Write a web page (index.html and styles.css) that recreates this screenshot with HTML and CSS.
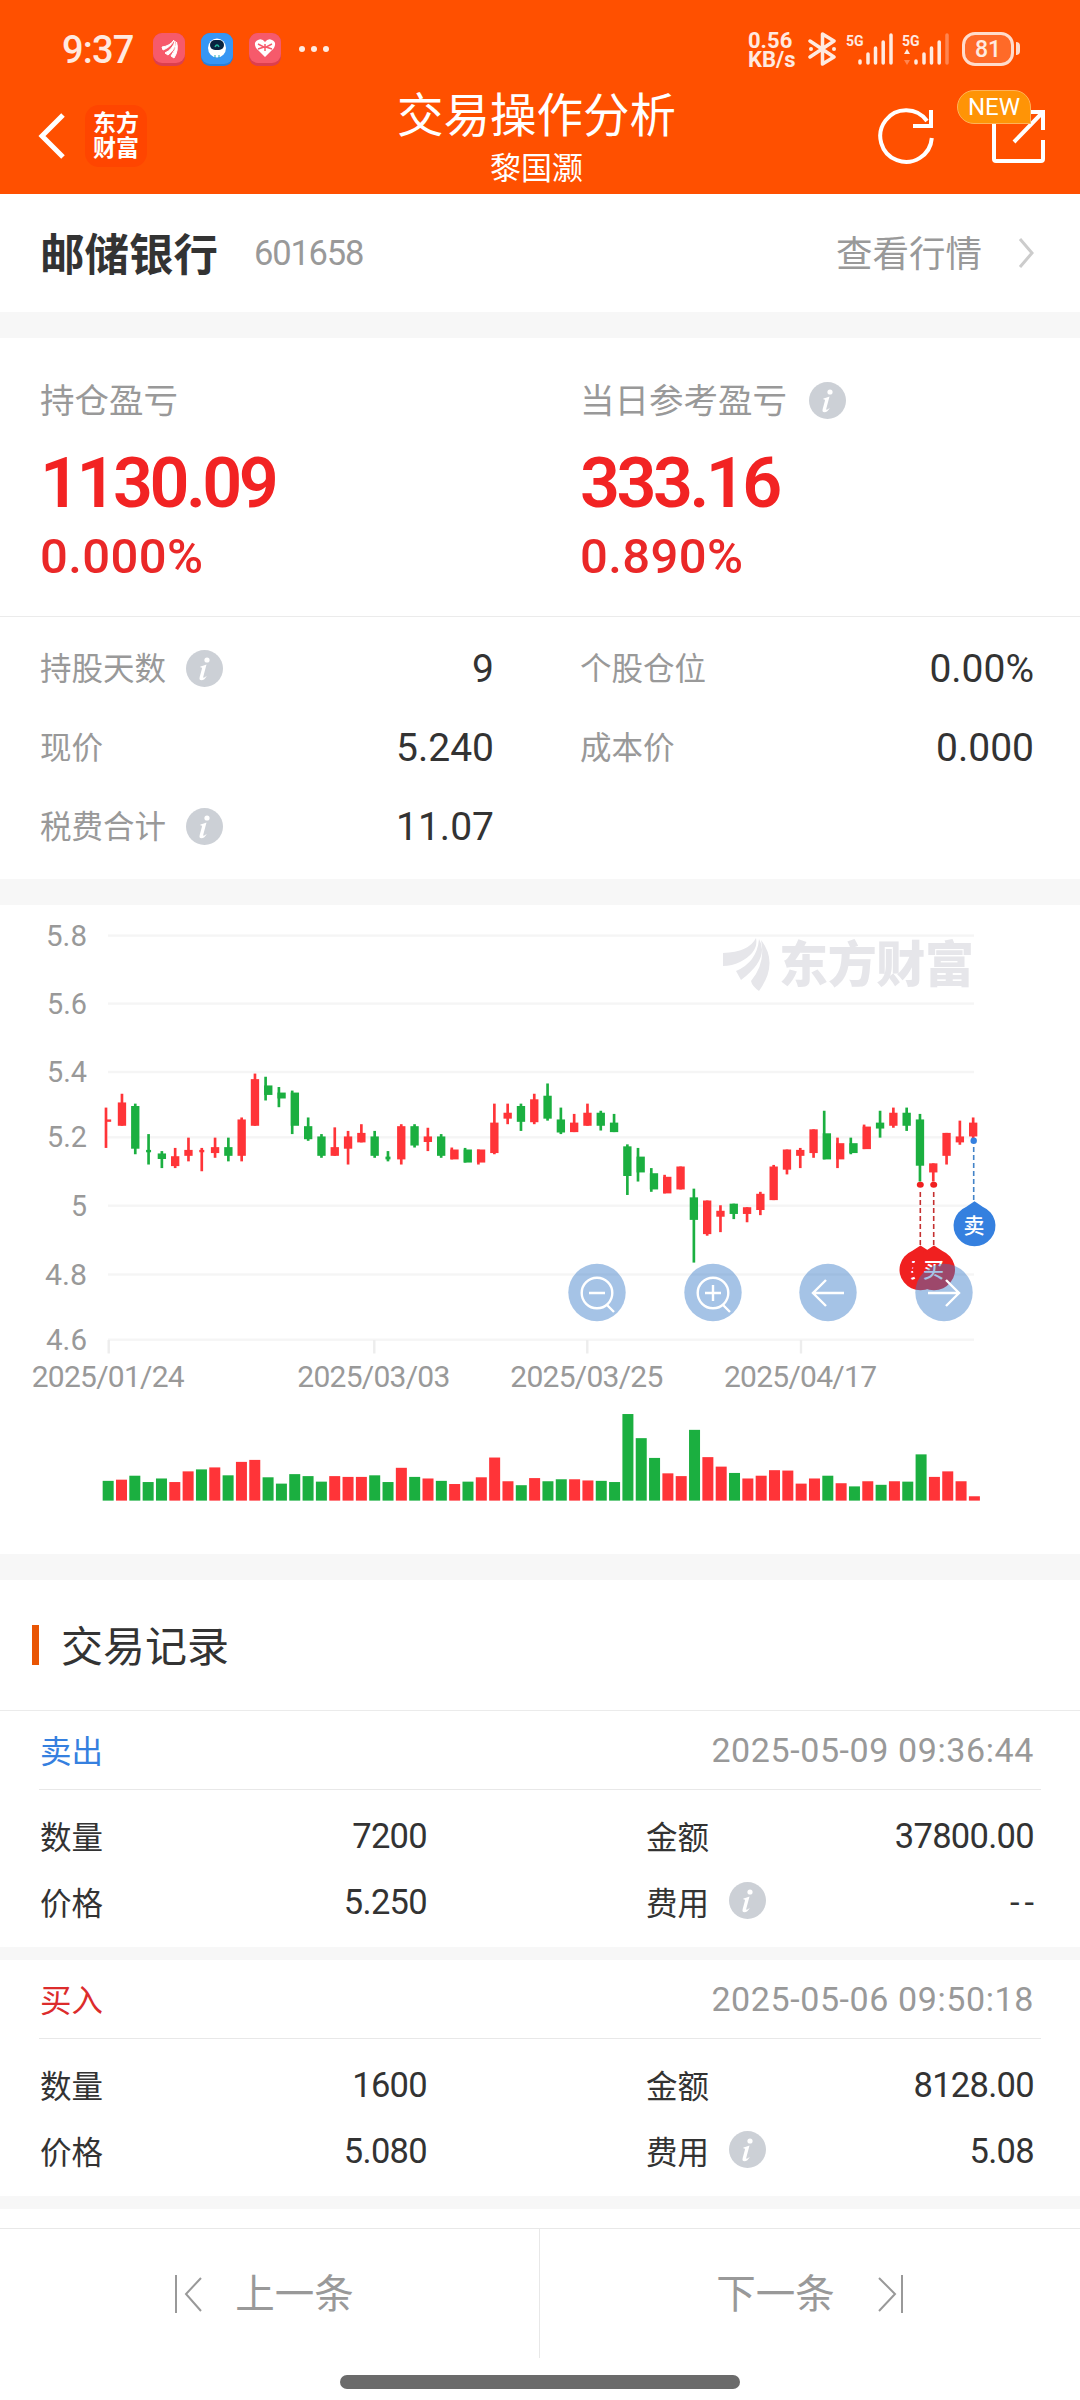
FILE: index.html
```html
<!DOCTYPE html>
<html lang="zh-CN">
<head>
  <meta charset="UTF-8">
  <meta name="viewport" content="width=device-width, initial-scale=1.0">
  <title>交易操作分析</title>
  <link rel="stylesheet" href="styles.css">
</head>
<body>

<svg class="defs" width="0" height="0">
  <symbol id="info" viewBox="0 0 37 37">
    <circle cx="18.500" cy="18.500" r="18.500" fill="#ccd0d6"/>
    <circle cx="21" cy="10" r="2.600" fill="#fff"/>
    <path d="M14.500 16.500 Q18 15.500 20.500 14.500 L17.200 27 Q17 28.800 20.800 25.800 Q18.500 30.300 15.500 30.300 Q12.800 30.200 13.700 27 L16 18.500 Q16.200 17.300 14.200 17.300 Z" fill="#fff"/>
  </symbol>
  <symbol id="signal" viewBox="0 0 36 32">
    <path d="M2 28v2M10 21v9M17.500 15v15M25.200 9v21" stroke="#ffeae0" stroke-width="3.500" stroke-linecap="round"/>
  </symbol>
</svg>

<header>
  <!-- Status bar -->
  <div class="status">
    <span class="time">9:37</span>
    <div class="apps">
      <svg width="32" height="33" viewBox="0 0 32 33"><rect width="32" height="33" rx="9" fill="#dc3f4e"/><rect width="32" height="30" rx="9" fill="#f65a6b"/><path d="M9 14Q17 13 21 7Q18 14 10 17ZM12 20Q20 16 22 8Q23 16 15 22ZM18 23Q23 17 23.500 9Q26 17 21 25Z" fill="#fff" stroke="#fff"/></svg>
      <svg width="32" height="33" viewBox="0 0 32 33"><rect width="32" height="33" rx="9" fill="#2a7fd8"/><rect width="32" height="31" rx="9" fill="#3796f4"/><ellipse cx="16" cy="15" rx="9" ry="9.500" fill="#fff"/><rect x="9" y="7" width="14" height="10" rx="5" fill="#0a2440"/><path d="M14 14q2-4 4 0" stroke="#23b79b" stroke-width="1.500" fill="none"/><path d="M14 22v3M18 22v3" stroke="#23a7b5"/></svg>
      <svg width="32" height="33" viewBox="0 0 32 33"><rect width="32" height="33" rx="9" fill="#dc3f4e"/><rect width="32" height="30" rx="9" fill="#f65a6b"/><path d="M16 24L7 15Q4 9 9 7Q13 5 16 9Q19 5 23 7Q28 9 25 15Z" fill="#fff"/><path d="M9 11l6 3-6 2M23 11l-6 3 6 2M16 11v7" stroke="#f65a6b" fill="none" stroke-width="1.500"/></svg>
    </div>
    <svg class="dots" width="32" height="8" viewBox="0 0 32 8"><circle cx="4" cy="4" r="3"/><circle cx="16" cy="4" r="3"/><circle cx="28" cy="4" r="3"/></svg>
    <div class="speed"><span>0.56</span><span>KB/s</span></div>
    <svg class="bluetooth" width="29" height="34" viewBox="0 0 29 34"><path d="M2 9L26 25L14.500 32V2L26 9L2 25" fill="none" stroke="#ffeae0" stroke-width="3.500" stroke-linejoin="round" stroke-linecap="round"/><circle cx="3" cy="17" r="2" fill="#ffeae0"/><circle cx="26" cy="17" r="2" fill="#ffeae0"/></svg>
    <div class="signal">
      <span>5G</span>
      <svg width="36" height="32"><use href="#signal"/><path d="M33 2v28" stroke="#ffeae0" stroke-width="3.500" stroke-linecap="round"/></svg>
    </div>
    <div class="signal">
      <span>5G</span>
      <svg class="updown" width="6" height="16" viewBox="0 0 6 16"><path d="M3 0l3 5H0z" fill="#ffeae0"/><path d="M3 16l3-5H0z" fill="#ff8550"/></svg>
      <svg width="36" height="32"><use href="#signal"/><path d="M33 2v28" stroke="#ff8550" stroke-width="3.500" stroke-linecap="round"/></svg>
    </div>
    <div class="battery">81</div>
  </div>

  <!-- Title bar -->
  <div class="navbar">
    <div class="nav-left">
      <svg width="28" height="46" viewBox="0 0 28 46"><path d="M25 2L4 23L25 44" fill="none" stroke="#fff" stroke-width="5"/></svg>
      <div class="brand">东方<br>财富</div>
    </div>
    <div class="nav-title">
      <h1>交易操作分析</h1>
      <p>黎国灏</p>
    </div>
    <div class="nav-right">
      <svg width="58" height="60" viewBox="0 0 58 60"><path d="M50 15A25.800 25.800 0 1 0 54.800 32" fill="none" stroke="#fff" stroke-width="4"/><path d="M54 4V20H36" fill="none" stroke="#fff" stroke-width="4"/></svg>
      <div class="share">
        <svg width="56" height="56" viewBox="0 0 56 56"><path d="M3 14V51Q3 53 5 53H50Q52 53 52 51V32M36 4H52V22M52 4L23 34" fill="none" stroke="#fff" stroke-width="4"/></svg>
        <span class="badge">NEW</span>
      </div>
    </div>
  </div>
</header>

<section class="stock">
  <h2>邮储银行</h2>
  <span class="code">601658</span>
  <a href="#">查看行情</a>
  <svg width="16" height="30" viewBox="0 0 16 30"><path d="M2 1L14 15L2 29" fill="none" stroke="#ccc" stroke-width="3"/></svg>
</section>

<section class="summary">
  <div class="totals">
    <div class="total">
      <div class="label"><span>持仓盈亏</span></div>
      <div class="amount">1130.09</div>
      <div class="percent">0.000%</div>
    </div>
    <div class="total">
      <div class="label"><span>当日参考盈亏</span><svg class="info"><use href="#info"/></svg></div>
      <div class="amount">333.16</div>
      <div class="percent">0.890%</div>
    </div>
  </div>
  <div class="details">
    <div class="detail"><span>持股天数</span><svg class="info"><use href="#info"/></svg><b>9</b></div>
    <div class="detail"><span>个股仓位</span><b>0.00%</b></div>
    <div class="detail"><span>现价</span><b>5.240</b></div>
    <div class="detail"><span>成本价</span><b>0.000</b></div>
    <div class="detail"><span>税费合计</span><svg class="info"><use href="#info"/></svg><b>11.07</b></div>
  </div>
</section>

<section class="chart">
  <svg width="1080" height="649" viewBox="0 5 1080 649">
    <!-- Watermark -->
    <g fill="#e6e6ea">
      <path d="M723 53Q749 52 756 38Q759 52 740 62Q732 66 723 66ZM736 71Q757 62 759 39Q770 58 741 80ZM751 81Q766 63 761 40Q779 63 759 91Q752 86 751 81Z"/>
      <text class="watermark" x="779" y="82" textLength="195">东方财富</text>
    </g>
    <g id="grid"></g>
    <!-- Candles and volume use a finer grid than the page -->
    <svg width="1080" height="620" viewBox="0 0 3240 1568" preserveAspectRatio="none">
      <g id="candles"></g>
      <g id="volume"></g>
    </svg>
    <!-- Trade markers -->
    <g class="buy">
      <path class="guide" d="M920.300 292V345M933.700 292V345"/>
      <ellipse cx="920.300" cy="284.700" rx="3.500" ry="3"/>
      <ellipse cx="933.700" cy="284.700" rx="3.500" ry="3"/>
      <path d="M920.500 345.500L929 351A21 20.500 0 1 1 912 351Z"/>
      <text x="910" y="377">买</text>
      <path d="M934 345.500L942.500 351A21 20.500 0 1 1 925.500 351Z"/>
      <text x="923" y="377">买</text>
    </g>
    <g class="sell">
      <path class="guide" d="M973.700 247V300"/>
      <circle cx="973.700" cy="240.800" r="3.200"/>
      <path d="M974.500 301.300L983 307A21 20.500 0 1 1 966 307Z"/>
      <text x="963.500" y="333">卖</text>
    </g>
    <!-- Zoom and scroll buttons -->
    <g class="control">
      <circle cx="597" cy="392.500" r="28.700"/>
      <circle cx="713" cy="392.500" r="28.700"/>
      <circle cx="828" cy="392.500" r="28.700"/>
      <circle cx="944" cy="392.500" r="28.700"/>
      <path d="M589 393h16M607 405l7 7M705 393h16M713 385v16M723 405l7 7"/>
      <path d="M844 393H813M826 380L813 393L826 406M928 393H959M946 380L959 393L946 406"/>
      <circle class="lens" cx="597" cy="393" r="15.300"/>
      <circle class="lens" cx="713" cy="393" r="15.300"/>
    </g>
  </svg>
</section>

<section class="records">
  <h3><span>交易记录</span></h3>
  <div class="record">
    <div class="record-head"><span class="sell-text">卖出</span><time>2025-05-09 09:36:44</time></div>
    <div class="record-body">
      <span>数量</span><b>7200</b><span>金额</span><b>37800.00</b>
      <span>价格</span><b>5.250</b><span>费用 <svg class="info"><use href="#info"/></svg></span><b class="dash">--</b>
    </div>
  </div>
  <div class="record">
    <div class="record-head"><span class="buy-text">买入</span><time>2025-05-06 09:50:18</time></div>
    <div class="record-body">
      <span>数量</span><b>1600</b><span>金额</span><b>8128.00</b>
      <span>价格</span><b>5.080</b><span>费用 <svg class="info"><use href="#info"/></svg></span><b>5.08</b>
    </div>
  </div>
</section>

<footer>
  <div class="pager">
    <a href="#"><svg width="28" height="38" viewBox="0 0 28 38"><path d="M1 0V38M26 3L11 19L26 36"/></svg><span>上一条</span></a>
    <a href="#"><span>下一条</span><svg width="28" height="38" viewBox="0 0 28 38"><path d="M26 0V38M3 3L19 19L3 36"/></svg></a>
  </div>
  <div class="home-bar"></div>
</footer>

<script src="chart.js"></script>
</body>
</html>
```

FILE: styles.css
```css
/* General Styling */
* {
  box-sizing: border-box;
}

body {
  margin: 0;
  width: 1080px;
  height: 2400px;
  overflow: hidden;
  display: flex;
  flex-direction: column;
  background: #f7f7f7;
  color: #333;
  font-family: Roboto, "Noto Sans CJK SC", sans-serif;
}

h1, h2, h3, p {
  margin: 0;
  font-weight: 400;
}

a {
  color: #999;
  text-decoration: none;
}

b {
  font-weight: 400;
}

svg {
  display: block;
  flex: none;
}

.defs {
  position: absolute;
}

.info {
  width: 37px;
  height: 37px;
}

/* Header */
header {
  height: 194px;
  background: #ff5000;
  color: #fff;
}

.status {
  display: flex;
  align-items: center;
  height: 78px;
  padding: 20px 60px 0 62px;
  color: #ffeae0;
}

.time {
  width: 91px;
  padding-top: 2px;
  font-size: 38px;
  font-weight: 500;
  letter-spacing: -0.8px;
}

.apps {
  display: flex;
  gap: 16px;
}

.dots {
  margin-left: 17px;
  fill: #ffeae0;
}

.speed {
  display: flex;
  flex-direction: column;
  width: 60px;
  margin-left: 418px;
  padding-top: 2px;
  font-size: 22px;
  font-weight: 700;
  line-height: 19px;
}

.bluetooth {
  margin-right: 9px;
}

.signal {
  position: relative;
  display: flex;
  padding-left: 12px;
  margin-right: 8px;
}

.signal span {
  position: absolute;
  left: 0;
  top: 0;
  font-size: 14px;
  font-weight: 700;
  line-height: 16px;
}

.updown {
  position: absolute;
  left: 2px;
  top: 16px;
}

.battery {
  position: relative;
  width: 52px;
  height: 34px;
  margin-left: 4px;
  border: 3.5px solid #ffdccc;
  border-radius: 13px;
  background: #ff6a28;
  font-size: 23px;
  font-weight: 500;
  line-height: 29px;
  text-align: center;
}

.battery::after {
  content: "";
  position: absolute;
  right: -9px;
  top: 7px;
  width: 4px;
  height: 13px;
  border-radius: 0 4px 4px 0;
  background: #ffdccc;
}

.navbar {
  display: grid;
  grid-template-columns: 292px 1fr 304px;
  height: 116px;
  padding: 0 33px 0 38px;
}

.nav-left {
  display: flex;
  align-items: center;
  gap: 19px;
}

.brand {
  width: 62px;
  height: 62px;
  padding-top: 4px;
  border-radius: 14px;
  background: #ff4500;
  font-family: "Noto Sans CJK SC", sans-serif;
  font-size: 23px;
  font-weight: 700;
  line-height: 25px;
  text-align: center;
}

.nav-title {
  display: flex;
  flex-direction: column;
  align-items: center;
  white-space: nowrap;
}

.nav-title h1 {
  font-size: 46.5px;
  line-height: 60px;
  margin-top: 8px;
}

.nav-title p {
  font-size: 31px;
  line-height: 44px;
  margin-top: 1px;
}

.nav-right {
  display: flex;
  justify-content: flex-end;
  align-items: center;
  gap: 56px;
}

.share {
  position: relative;
}

.badge {
  position: absolute;
  right: 16px;
  top: -18px;
  width: 74px;
  height: 34px;
  border: 1px solid #ffb257;
  border-radius: 17px 17px 0 17px;
  background: #ff9406;
  font-size: 24px;
  line-height: 33px;
  text-align: center;
}

/* Stock name */
.stock {
  display: flex;
  align-items: center;
  height: 118px;
  padding: 0 46px 0 40px;
  background: #fff;
}

.stock h2 {
  padding-bottom: 4px;
  font-size: 44.5px;
  font-weight: 700;
}

.code {
  margin-left: 36px;
  font-size: 34.5px;
  letter-spacing: -1.2px;
  color: #999;
}

.stock a {
  margin-left: auto;
  margin-right: 36px;
  padding-bottom: 4px;
  font-size: 36.5px;
}

/* Profit summary */
.summary {
  height: 541px;
  margin-top: 26px;
  background: #fff;
}

.totals {
  display: grid;
  grid-template-columns: 540px 540px;
  height: 279px;
  padding-top: 38px;
  border-bottom: 1px solid #ebebeb;
}

.total {
  padding-left: 40px;
}

.label {
  display: flex;
  align-items: center;
  gap: 22px;
  height: 48px;
  font-size: 34.5px;
  color: #999;
}

.label span,
.detail span {
  padding-bottom: 5px;
}

.amount {
  margin-top: 19px;
  font-size: 70px;
  font-weight: 600;
  line-height: 80px;
  letter-spacing: -3.5px;
  color: #f22323;
}

.percent {
  margin-top: 4px;
  font-size: 49px;
  font-weight: 500;
  line-height: 60px;
  letter-spacing: 0.4px;
  color: #ea2828;
}

.details {
  display: grid;
  grid-template-columns: 540px 540px;
  grid-auto-rows: 79px;
  padding-top: 12px;
}

.detail {
  display: flex;
  align-items: center;
  gap: 20px;
  padding: 0 46px 0 40px;
  font-size: 31.5px;
  color: #999;
}

.detail b {
  margin-left: auto;
  font-size: 39px;
  color: #333;
}

/* Chart */
.chart {
  height: 649px;
  margin-top: 26px;
  background: #fff;
}

.watermark {
  font-family: "Noto Sans CJK SC", sans-serif;
  font-size: 49px;
  font-weight: 900;
}

.axis {
  font-size: 30px;
  fill: #999;
}

.buy {
  fill: #f02020;
}

.sell {
  fill: #3580df;
}

.buy text,
.sell text {
  font-size: 21px;
  font-weight: 500;
  fill: #fff;
}

.guide {
  fill: none;
  stroke-width: 1.6;
  stroke-dasharray: 5 3;
}

.buy .guide {
  stroke: #c53030;
}

.sell .guide {
  stroke: #4383c8;
}

.control {
  fill: rgba(55, 122, 200, 0.45);
}

.control path,
.control .lens {
  fill: none;
  stroke: #fff;
  stroke-width: 2.4;
}

/* Trade records */
.records {
  margin-top: 26px;
}

.records h3 {
  display: flex;
  align-items: center;
  height: 131px;
  padding-left: 32px;
  border-bottom: 1px solid #ebebeb;
  background: #fff;
  font-size: 42px;
}

.records h3::before {
  content: "";
  width: 7px;
  height: 40px;
  margin-right: 22px;
  background: #e95504;
}

.records h3 span {
  padding-bottom: 4px;
}

.record {
  height: 236px;
  margin-bottom: 13px;
  background: #fff;
}

.record-head {
  display: flex;
  justify-content: space-between;
  align-items: center;
  height: 79px;
  margin: 0 39px;
  padding: 0 7px 0 1px;
  border-bottom: 1px solid #e8e8e8;
  font-size: 31.5px;
}

.record-head span {
  padding-bottom: 3px;
}

.record-head time {
  font-size: 34px;
  letter-spacing: 0.6px;
  color: #999;
}

.sell-text {
  color: #3580df;
}

.buy-text {
  color: #dc2c2c;
}

.record-body {
  display: grid;
  grid-template-columns: 194px 193px 1fr 194px;
  grid-auto-rows: 66px;
  align-items: center;
  padding: 13px 46px 0 40px;
  font-size: 31.5px;
}

.record-body span {
  display: flex;
  align-items: center;
  gap: 20px;
  padding-bottom: 3px;
}

.record-body span:nth-of-type(even) {
  padding-left: 219px;
}

.record-body b {
  font-size: 34.5px;
  letter-spacing: -0.7px;
  text-align: right;
}

.record-body .dash {
  letter-spacing: 5px;
  margin-right: -5px;
}

/* Footer */
footer {
  flex: 1;
  padding-top: 19px;
  background: #fff;
}

.pager {
  display: grid;
  grid-template-columns: 1fr 1fr;
  height: 130px;
  border-top: 1px solid #e8e8e8;
}

.pager a {
  display: flex;
  align-items: center;
  justify-content: center;
  gap: 32px;
  font-size: 39.5px;
}

.pager a:first-child {
  padding-right: 10px;
  border-right: 1px solid #e8e8e8;
}

.pager a:last-child {
  gap: 41px;
}

.pager span {
  padding-bottom: 6px;
}

.pager path {
  fill: none;
  stroke: #999;
  stroke-width: 2;
}

.home-bar {
  width: 400px;
  height: 14px;
  margin: 17px auto 0;
  border-radius: 7px;
  background: #6b6b6b;
}
```

FILE: chart.js
```javascript
// [up, high, body top, body bottom, low, volume, wick on the left edge]
var candles = [
  [1,525,555,561,627,50,1],[1,490,512,571,571,53],[0,515,521,629,643,63],[0,592,632,638,669,47],
  [0,635,641,655,678,56],[1,627,648,673,678,47],[1,601,632,647,661,74],[1,627,632,638,686,79],
  [1,601,625,640,652,84],[0,601,625,647,661,64],[1,550,555,647,661,98],[1,439,453,571,571,103],
  [0,447,469,493,507,59,1],[0,473,487,502,524,43,1],[0,482,487,571,592,67,1],[0,550,572,605,609,62],
  [0,592,598,647,652,48],[1,575,625,647,647,62],[1,584,598,629,669,60],[1,567,589,613,613,60],
  [0,584,598,647,652,64],[0,635,649,656,661,47],[1,567,572,656,669,83],[0,567,572,621,626,60],
  [1,576,598,612,635,56],[0,592,598,647,652,50],[1,626,631,656,656,42,1],[0,627,631,664,664,48,1],
  [1,631,631,664,669,59,1],[1,515,563,640,643,109],[1,515,538,553,567,49],[0,515,521,561,584,39],
  [1,490,504,562,567,57],[0,464,495,553,558,49],[0,525,555,588,592,54],[1,541,563,587,587,54],
  [1,515,538,571,571,51],[0,533,538,571,583,50],[0,541,563,587,587,47],[0,618,623,698,746,219],
  [0,627,649,689,712,158,1],[0,678,691,732,738,108,1],[1,695,700,742,742,69,1],[1,674,674,732,732,62],
  [0,730,752,809,917,179],[1,760,760,845,849,110],[1,772,786,801,840,86],[0,768,768,794,807,70],
  [1,777,777,794,815,56],[1,738,743,784,797,63],[1,670,674,759,759,77],[1,631,631,682,694,76],
  [1,627,632,647,678,43],[1,580,580,640,652,56],[0,533,590,656,656,63,1],[1,601,615,656,678,44,1],
  [0,601,615,640,643,36,1],[1,568,573,630,630,49,1],[0,533,563,578,601,40],[1,525,538,571,576,49],
  [0,525,538,571,584,48],[0,541,555,672,712,117],[1,666,666,689,712,60],[1,589,589,647,669,74],
  [1,558,598,613,619,49],[1,550,563,598,605,11]
];
var UP = '#ff3438';
var DOWN = '#1baf40';

function rect(x, y, w, h, color) {
  return '<rect x="' + x + '" y="' + y + '" width="' + w + '" height="' + h + '" fill="' + color + '"/>';
}

function drawCandles() {
  var bodies = '';
  var bars = '';
  candles.forEach(function(c, i) {
    var color = c[0] ? UP : DOWN;
    var x = 326 + i * 39.9;
    var small = c[3] - c[2] < 8;
    var w = small ? 15 : 25;
    bodies += rect(x - 4 - (c[6] ? 8 : 0), c[1], 8, c[4] - c[1], color);
    bodies += rect(x - w / 2, c[2], w, c[3] - c[2], color);
    bars += rect(308 + i * 39.98, 1519 - c[5], 33, c[5], i === 0 || i === 7 ? DOWN : color);
  });
  document.getElementById('candles').innerHTML = bodies;
  document.getElementById('volume').innerHTML = bars;
}

function drawAxes() {
  var prices = [['5.8', 35.6, 41], ['5.6', 103.6, 40], ['5.4', 172, 40], ['5.2', 237.3, 40], ['5', 305.7, 16], ['4.8', 374.5, 42], ['4.6', 439.7, 41]];
  var dates = [['2025/01/24', 108.7], ['2025/03/03', 374.3], ['2025/03/25', 587.3], ['2025/04/17', 801]];
  var out = '';
  prices.forEach(function(p) {
    out += rect(108, p[1] - 1.2, 866, 2.4, '#f5f5f5');
    out += '<text class="axis" x="' + (87 - p[2]) + '" y="' + (p[1] + 10) + '" textLength="' + p[2] + '" lengthAdjust="spacingAndGlyphs">' + p[0] + '</text>';
  });
  dates.forEach(function(d) {
    out += rect(d[1] - 1.2, 440, 2.4, 13.5, '#ededed');
    out += '<text class="axis" x="' + (d[1] - 77) + '" y="487" textLength="153">' + d[0] + '</text>';
  });
  document.getElementById('grid').innerHTML = out;
}

drawAxes();
drawCandles();
```
